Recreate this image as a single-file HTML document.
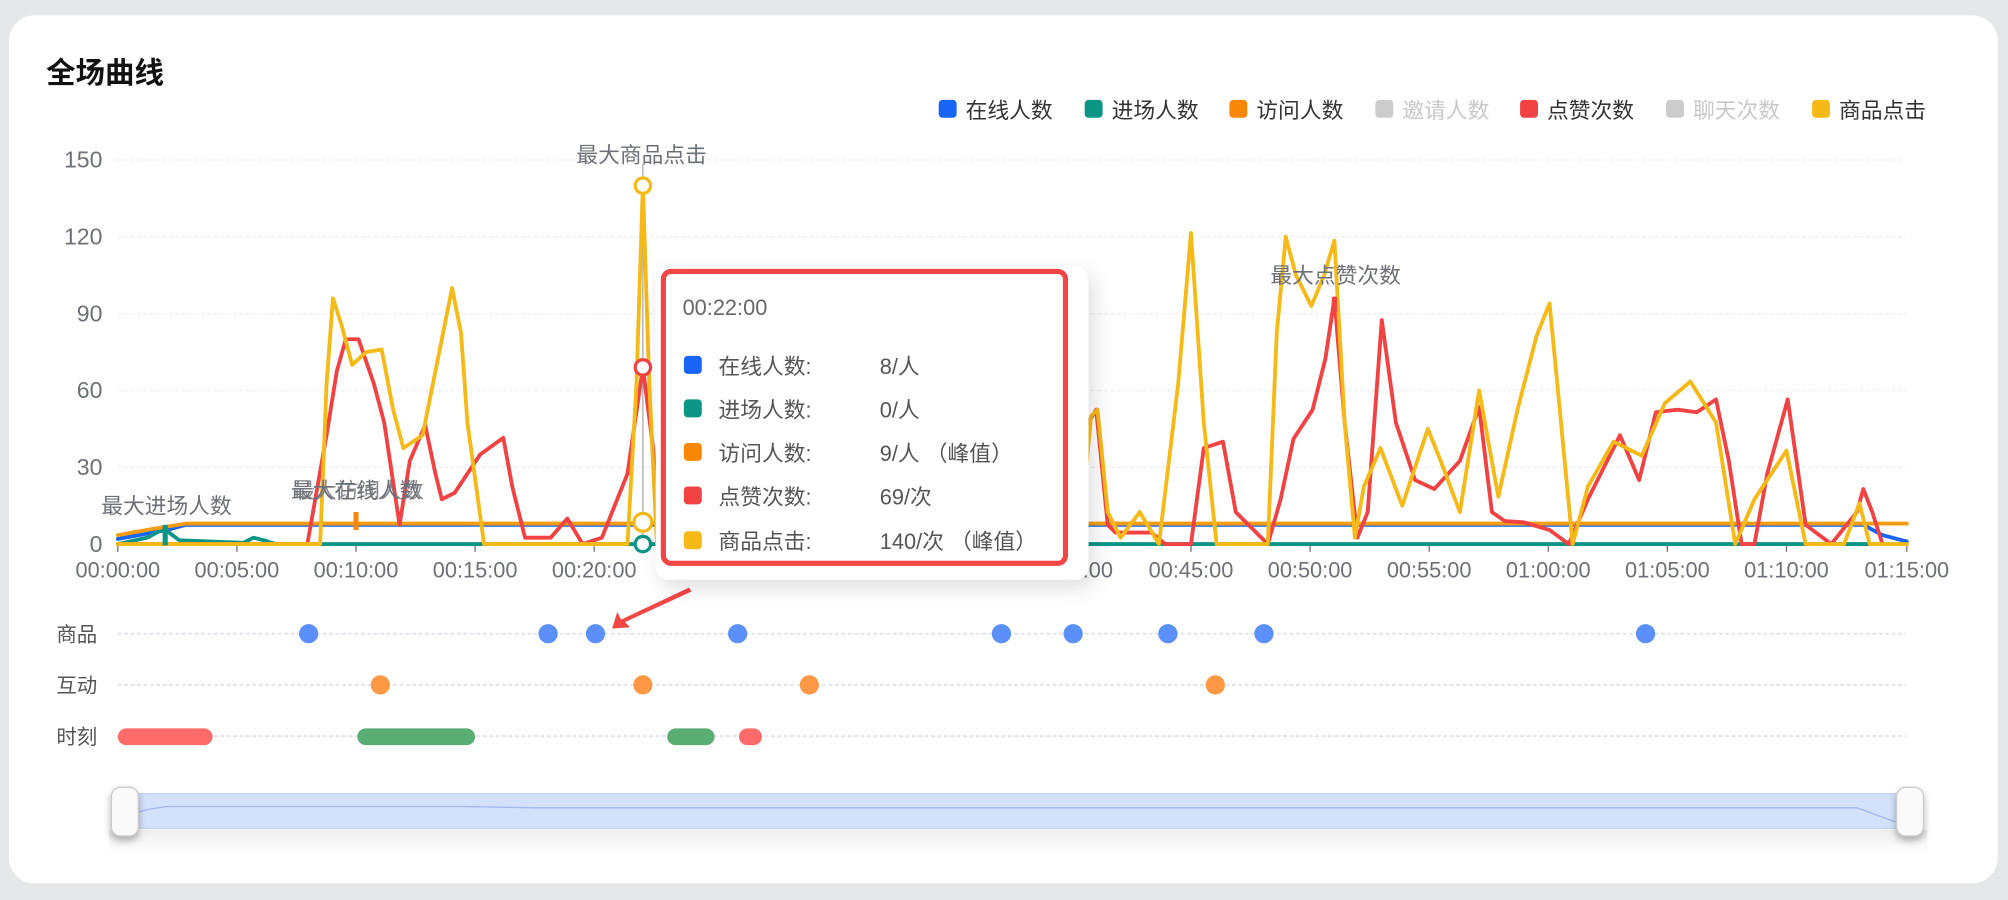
<!DOCTYPE html>
<html><head><meta charset="utf-8"><style>
html,body{margin:0;padding:0;width:2008px;height:900px;overflow:hidden;background:#e6e7e9;}
#w{position:absolute;left:0;top:0;width:1568px;height:703px;transform:scale(1.28061,1.2802);transform-origin:0 0;font-family:"Liberation Sans","Noto Sans CJK SC",sans-serif;}
.card{position:absolute;left:7px;top:12px;width:1553px;height:678px;background:#fff;border-radius:20px;}
.t{position:absolute;white-space:nowrap;}
.lg{position:absolute;top:72px;font-size:17px;color:#333;display:flex;align-items:center;}
.lg i{display:inline-block;width:14px;height:14px;border-radius:3px;margin-right:7px;}
.tipbg{position:absolute;left:512px;top:208px;width:338px;height:245px;background:#fff;border-radius:10px;box-shadow:4px 6px 16px rgba(0,0,0,.13);}
.tip{position:absolute;left:516px;top:210px;width:310px;height:224px;border:4px solid #f24646;border-radius:8px;background:#fff;}
.row{position:absolute;left:14px;font-size:17px;color:#555;display:flex;align-items:center;}
.row i{width:14px;height:14px;border-radius:3px;margin-right:13px;display:inline-block}
.row span{display:inline-block;width:126px}
</style></head><body><div id="w">
<div class="card"></div>
<div class="t" style="left:36px;top:38px;font-size:23px;font-weight:bold;color:#111">全场曲线</div>
<div class="lg" style="left:733px"><i style="background:#1764f5"></i>在线人数</div>
<div class="lg" style="left:847px"><i style="background:#0a9585"></i>进场人数</div>
<div class="lg" style="left:960px"><i style="background:#fa8806"></i>访问人数</div>
<div class="lg" style="left:1074px;color:#c8c8c8"><i style="background:#ccc"></i>邀请人数</div>
<div class="lg" style="left:1187px"><i style="background:#f24243"></i>点赞次数</div>
<div class="lg" style="left:1301px;color:#c8c8c8"><i style="background:#ccc"></i>聊天次数</div>
<div class="lg" style="left:1415px"><i style="background:#f5b918"></i>商品点击</div>
<svg style="position:absolute;left:0;top:0" width="1568" height="703" font-family="Liberation Sans,Noto Sans CJK SC,sans-serif">
<g stroke="#eceef2" stroke-dasharray="3,2" stroke-width="1">
<line x1="92" y1="125" x2="1488" y2="125"/><line x1="92" y1="185" x2="1488" y2="185"/><line x1="92" y1="245" x2="1488" y2="245"/><line x1="92" y1="305" x2="1488" y2="305"/><line x1="92" y1="365" x2="1488" y2="365"/>
</g>
<g fill="#6e7079" font-size="18" text-anchor="end">
<text x="80" y="131">150</text><text x="80" y="191">120</text><text x="80" y="251">90</text><text x="80" y="311">60</text><text x="80" y="371">30</text><text x="80" y="431">0</text>
</g>
<g fill="#6e7079" font-size="17" text-anchor="middle">
<text x="92" y="451">00:00:00</text><text x="185" y="451">00:05:00</text><text x="278" y="451">00:10:00</text><text x="371" y="451">00:15:00</text><text x="464" y="451">00:20:00</text><text x="557" y="451">00:25:00</text><text x="650" y="451">00:30:00</text><text x="743" y="451">00:35:00</text><text x="836" y="451">00:40:00</text><text x="930" y="451">00:45:00</text><text x="1023" y="451">00:50:00</text><text x="1116" y="451">00:55:00</text><text x="1209" y="451">01:00:00</text><text x="1302" y="451">01:05:00</text><text x="1395" y="451">01:10:00</text><text x="1489" y="451">01:15:00</text>
</g>
<g stroke="#6e7079" stroke-width="1"><line x1="92" y1="425" x2="92" y2="431"/><line x1="185" y1="425" x2="185" y2="431"/><line x1="278" y1="425" x2="278" y2="431"/><line x1="371" y1="425" x2="371" y2="431"/><line x1="464" y1="425" x2="464" y2="431"/><line x1="930" y1="425" x2="930" y2="431"/><line x1="1023" y1="425" x2="1023" y2="431"/><line x1="1116" y1="425" x2="1116" y2="431"/><line x1="1209" y1="425" x2="1209" y2="431"/><line x1="1302" y1="425" x2="1302" y2="431"/><line x1="1395" y1="425" x2="1395" y2="431"/><line x1="1489" y1="425" x2="1489" y2="431"/></g>
<line x1="502" y1="128" x2="502" y2="425" stroke="#aaa" stroke-width="1"/>
<g fill="none" stroke-width="3" stroke-linejoin="round" stroke-linecap="round">
<polyline stroke="#1764f5" points="92,421 130,414 145,410 1455,410 1470,418 1489,423"/>
<polyline stroke="#0a9585" points="92,425 115,420 128,413 140,422 190,424 198,420 206,422 215,425 1489,425"/>
<polyline stroke="#f39c12" points="92,418 120,413 145,409 1489,409"/>
<polyline stroke="#f24243" points="92,425 240,425 255,340 263,290 270,265 280,265 292,300 300,330 312,410 320,360 332,332 340,370 345,390 355,385 375,355 393,342 400,380 410,420 430,420 443,405 455,425 470,420 490,370 502,287 510,350 516,425 840,425 850,330 856,320 865,410 871,416 899,416 910,425 930,425 940,350 955,345 965,400 990,425 1000,390 1010,343 1025,320 1035,280 1042,233 1050,330 1060,420 1068,400 1079,250 1090,330 1105,375 1120,382 1140,360 1155,318 1165,400 1175,407 1190,408 1210,414 1225,425 1240,390 1265,340 1280,375 1293,322 1310,320 1325,322 1340,312 1350,360 1360,425 1370,425 1380,370 1396,312 1410,410 1430,425 1450,400 1455,382 1462,400 1470,425"/>
<polyline stroke="#f5b918" points="92,425 250,425 255,300 260,233 267,255 275,285 286,275 298,273 307,320 315,350 330,340 342,280 353,225 360,260 365,330 378,425 490,425 497,300 502,145 507,300 513,425 835,425 845,400 852,325 857,320 865,400 875,420 890,400 905,425 920,300 930,182 940,330 950,425 990,425 997,260 1004,185 1012,215 1024,239 1034,215 1042,188 1050,330 1058,420 1065,380 1078,350 1095,395 1115,335 1125,360 1140,400 1155,305 1170,388 1185,320 1200,262 1210,237 1218,320 1228,425 1240,380 1260,345 1282,356 1300,315 1320,298 1340,330 1355,425 1370,390 1395,352 1410,425 1440,425 1452,393 1460,425 1489,425"/>
</g>
<rect x="127" y="410" width="4" height="16" fill="#0a9585"/><rect x="276" y="400" width="4" height="14" fill="#fa8806"/><rect x="1040" y="232" width="4" height="12" fill="#f24243"/>
<g fill="#fff" stroke-width="2.5"><circle cx="502" cy="145" r="6" stroke="#f5b918"/><circle cx="502" cy="287" r="6" stroke="#f24243"/><circle cx="502" cy="408" r="7" stroke="#f5b918"/><circle cx="502" cy="425" r="6" stroke="#0a9585"/></g>
<g fill="#6e7079" font-size="17" text-anchor="middle"><text x="501" y="127">最大商品点击</text><text x="130" y="401">最大进场人数</text><text x="278" y="389">最大在线人数</text><text x="280" y="389" opacity=".8">最大访问人数</text><text x="1043" y="221">最大点赞次数</text></g>
<g stroke="#dfe3ea" stroke-dasharray="3,2" stroke-width="1.5"><line x1="92" y1="495" x2="1488" y2="495"/><line x1="92" y1="535" x2="1488" y2="535"/><line x1="92" y1="575" x2="1488" y2="575"/></g>
<g fill="#555" font-size="16"><text x="44" y="501">商品</text><text x="44" y="541">互动</text><text x="44" y="581">时刻</text></g>
<g fill="#5b8ff9"><circle cx="241" cy="495" r="7.5"/><circle cx="428" cy="495" r="7.5"/><circle cx="465" cy="495" r="7.5"/><circle cx="576" cy="495" r="7.5"/><circle cx="782" cy="495" r="7.5"/><circle cx="838" cy="495" r="7.5"/><circle cx="912" cy="495" r="7.5"/><circle cx="987" cy="495" r="7.5"/><circle cx="1285" cy="495" r="7.5"/></g>
<g fill="#ff9845"><circle cx="297" cy="535" r="7.5"/><circle cx="502" cy="535" r="7.5"/><circle cx="632" cy="535" r="7.5"/><circle cx="949" cy="535" r="7.5"/></g>
<rect x="92" y="569" width="74" height="13" rx="6.5" fill="#ff6b6b"/><rect x="279" y="569" width="92" height="13" rx="6.5" fill="#5aae74"/><rect x="521" y="569" width="37" height="13" rx="6.5" fill="#5aae74"/><rect x="577" y="569" width="18" height="13" rx="6.5" fill="#ff6b6b"/>
<polygon points="538,459 485,484 482,478 478,491 492,490 488,486 540,462" fill="#f24646"/>
<defs><linearGradient id="sh" x1="0" y1="0" x2="0" y2="1"><stop offset="0" stop-color="#ccc"/><stop offset="1" stop-color="#fff"/></linearGradient></defs>
<rect x="85" y="648" width="1420" height="18" fill="url(#sh)" opacity=".35"/>
<rect x="100" y="620" width="1390" height="27" fill="#d4e1fa" stroke="#c3d3f5"/>
<polyline points="100,636 117,632 130,630 220,630 264,630 360,630 420,631 520,631 580,631 1450,631 1480,642" fill="none" stroke="#9fb8ef" stroke-width="1"/>
<rect x="87" y="615" width="21" height="38" rx="7" fill="#fafafa" stroke="#ccc" style="filter:drop-shadow(0 3px 3px rgba(0,0,0,.3))"/>
<rect x="1481" y="615" width="21" height="38" rx="7" fill="#fafafa" stroke="#ccc" style="filter:drop-shadow(0 3px 3px rgba(0,0,0,.3))"/>
</svg>
<div class="tipbg"></div>
<div class="tip">
<div class="t" style="left:13px;top:17px;font-size:17px;color:#666">00:22:00</div>
<div class="row" style="top:58px"><i style="background:#1764f5"></i><span>在线人数:</span>8/人</div>
<div class="row" style="top:92px"><i style="background:#0a9585"></i><span>进场人数:</span>0/人</div>
<div class="row" style="top:126px"><i style="background:#fa8806"></i><span>访问人数:</span>9/人 （峰值）</div>
<div class="row" style="top:160px"><i style="background:#f24243"></i><span>点赞次数:</span>69/次</div>
<div class="row" style="top:195px"><i style="background:#f5b918"></i><span>商品点击:</span>140/次 （峰值）</div>
</div>
</div></body></html>
